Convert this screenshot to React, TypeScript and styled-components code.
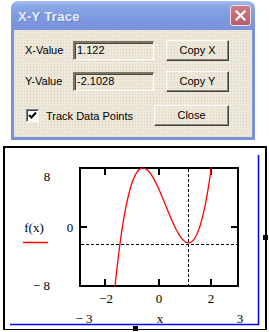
import React from 'react'
import styled, { createGlobalStyle } from 'styled-components'

const GlobalStyle = createGlobalStyle`
  html, body {
    margin: 0;
    padding: 0;
    background: #ffffff;
  }
  body {
    width: 269px;
    height: 332px;
    overflow: hidden;
    font-family: "Liberation Sans", Arial, sans-serif;
  }
`

const Page = styled.div`
  display: flex;
  flex-direction: column;
  width: 269px;
  height: 332px;
`

const Window = styled.div`
  margin: 1px 0 0 11px;
  width: 244px;
  display: flex;
  flex-direction: column;
`

const TitleBar = styled.div`
  height: 29px;
  border-radius: 7px 7px 0 0;
  background: linear-gradient(180deg, #a9bff0 0%, #8aa6e6 18%, #7d99e0 60%, #7893dc 100%);
  display: flex;
  align-items: center;
  justify-content: space-between;
  padding: 0 4px 0 7px;
`

const Title = styled.span`
  color: #e6edfb;
  font-size: 13px;
  font-weight: bold;
  letter-spacing: 0.3px;
  text-shadow: 1px 1px 0 #6a82c8;
  margin-top: 1px;
`

const CloseBox = styled.div`
  width: 19px;
  height: 19px;
  border: 1px solid #f2dce4;
  border-radius: 3px;
  background: linear-gradient(180deg, #cc7c86 0%, #b95d6c 100%);
  display: flex;
  align-items: center;
  justify-content: center;
`

const Body = styled.div`
  border: 3px solid #7893dc;
  border-top: none;
  height: 107px;
  box-sizing: content-box;
  background-color: #ece9d8;
  background-image: radial-gradient(circle, rgba(226, 196, 206, 0.9) 0.55px, transparent 0.75px);
  background-size: 3px 3px;
  padding: 10px 0 0 11px;
  box-sizing: border-box;
  height: 110px;
`

const Grid = styled.div`
  display: grid;
  grid-template-columns: 48px 81px 75px;
  column-gap: 0;
  & > :nth-child(3n) {
    margin-left: 12px;
  }
`

const Row = styled.div<{ $gap: number }>`
  display: contents;
`

const Label = styled.div<{ $top: number }>`
  font-size: 11px;
  color: #000;
  height: 21px;
  line-height: 21px;
  margin-top: ${p => p.$top}px;
`

const ValueBox = styled.div<{ $top: number }>`
  margin-top: ${p => p.$top + 1}px;
  height: 19px;
  box-sizing: border-box;
  border-style: solid;
  border-width: 2px 1px 1px 2px;
  border-color: #7a7768 #ffffff #ffffff #7a7768;
  box-shadow: inset 1px 1px 0 #4a473c;
  font-size: 11px;
  line-height: 15px;
  padding-left: 2px;
  color: #000;
`

const Button = styled.div<{ $top: number }>`
  margin-top: ${p => p.$top}px;
  height: 21px;
  box-sizing: border-box;
  border-style: solid;
  border-width: 1px;
  border-color: #ffffff #404040 #404040 #ffffff;
  box-shadow: inset -1px -1px 0 #8a877a;
  font-size: 11px;
  line-height: 19px;
  text-align: center;
  color: #000;
`

const CheckRow = styled.div`
  grid-column: 1 / span 2;
  margin-top: 13px;
  height: 21px;
  display: flex;
  align-items: center;
  padding-left: 1px;
  gap: 7px;
  font-size: 11px;
  color: #000;
`

const CheckBox = styled.div`
  width: 13px;
  height: 13px;
  box-sizing: border-box;
  background: #ffffff;
  border-style: solid;
  border-width: 1px;
  border-color: #808080 #ffffff #ffffff #808080;
  box-shadow: inset 1px 1px 0 #404040;
  display: flex;
  align-items: center;
  justify-content: center;
`

const Frame = styled.div`
  position: relative;
  margin: 6px 0 0 3px;
  width: 264px;
  height: 184px;
  box-sizing: border-box;
  border: 2px solid #000;
  border-bottom-width: 1px;
`

const Handle = styled.span<{ $x: number; $y: number }>`
  position: absolute;
  left: ${p => p.$x}px;
  top: ${p => p.$y}px;
  width: 5px;
  height: 5px;
  background: #000;
`

const Plot = styled.svg`
  display: block;
  font-family: "Liberation Serif", "Times New Roman", serif;
  font-size: 13px;
`

const f = (x: number) => 4 * x * x * x - 3 * x * x - 8 * x + 5
const px = (x: number) => 159 + x * (80 / 3)
const py = (y: number) => 227 - y * 7.5

const curve = (() => {
  const pts: string[] = []
  for (let x = -3; x <= 3.0001; x += 0.01) {
    pts.push(`${px(x).toFixed(2)},${py(f(x)).toFixed(2)}`)
  }
  return 'M' + pts.join(' L')
})()

const ValueRow = ({ label, value, button, top }: { label: string; value: string; button: string; top: number }) => (
  <>
    <Label $top={top}>{label}</Label>
    <ValueBox $top={top}>{value}</ValueBox>
    <Button $top={top}>{button}</Button>
  </>
)

export default function App() {
  return (
    <Page>
      <GlobalStyle />
      <Window>
        <TitleBar>
          <Title>X-Y Trace</Title>
          <CloseBox>
            <svg width="11" height="11" viewBox="0 0 11 11">
              <path d="M1.5 1.5 L9.5 9.5 M9.5 1.5 L1.5 9.5" stroke="#fff" strokeWidth="2.2" strokeLinecap="square" />
            </svg>
          </CloseBox>
        </TitleBar>
        <Body>
          <Grid>
            <ValueRow label="X-Value" value="1.122" button="Copy X" top={0} />
            <ValueRow label="Y-Value" value="-2.1028" button="Copy Y" top={10} />
            <CheckRow>
              <CheckBox>
                <svg width="9" height="9" viewBox="0 0 9 9">
                  <path d="M1 4 L3.5 6.5 L8 1.5" stroke="#000" strokeWidth="2" fill="none" />
                </svg>
              </CheckBox>
              Track Data Points
            </CheckRow>
            <Button $top={13}>Close</Button>
          </Grid>
        </Body>
      </Window>

      <Frame>
        <Plot width="260" height="181" viewBox="5 148 260 181">
          <defs>
            <clipPath id="plotclip">
              <rect x="79" y="167" width="160" height="120" />
            </clipPath>
          </defs>
          <text x="47" y="181" textAnchor="middle">8</text>
          <text x="70" y="232" textAnchor="middle">0</text>
          <text x="34" y="232" textAnchor="middle">f(x)</text>
          <line x1="23" y1="242.5" x2="48" y2="242.5" stroke="#ff0000" strokeWidth="1.5" />
          <text x="50" y="290" textAnchor="end">− 8</text>

          <rect x="80" y="168" width="158" height="118" fill="none" stroke="#000" strokeWidth="2" />
          {[105, 159, 211].map(x => (
            <g key={x}>
              <line x1={x} y1="168" x2={x} y2="175" stroke="#000" strokeWidth="2" />
              <line x1={x} y1="279" x2={x} y2="286" stroke="#000" strokeWidth="2" />
            </g>
          ))}
          <line x1="80" y1="227" x2="87" y2="227" stroke="#000" strokeWidth="2" />
          <line x1="231" y1="227" x2="238" y2="227" stroke="#000" strokeWidth="2" />

          <line x1="188.5" y1="169" x2="188.5" y2="285" stroke="#000" strokeWidth="1" strokeDasharray="3 2" />
          <line x1="81" y1="244.5" x2="237" y2="244.5" stroke="#000" strokeWidth="1" strokeDasharray="3 2" />

          <path d={curve} fill="none" stroke="#ff0000" strokeWidth="1.3" clipPath="url(#plotclip)" />

          <text x="106" y="303" textAnchor="middle">−2</text>
          <text x="159" y="303" textAnchor="middle">0</text>
          <text x="211" y="303" textAnchor="middle">2</text>
          <text x="84" y="323" textAnchor="middle">− 3</text>
          <text x="160" y="323" textAnchor="middle">x</text>
          <text x="240" y="323" textAnchor="middle">3</text>

          <line x1="258.5" y1="155" x2="258.5" y2="325" stroke="#0000ff" strokeWidth="1.5" />
          <line x1="10" y1="324.5" x2="259" y2="324.5" stroke="#0000ff" strokeWidth="1.5" />
        </Plot>
        <Handle $x={258} $y={87} />
        <Handle $x={128} $y={178} />
      </Frame>
    </Page>
  )
}
